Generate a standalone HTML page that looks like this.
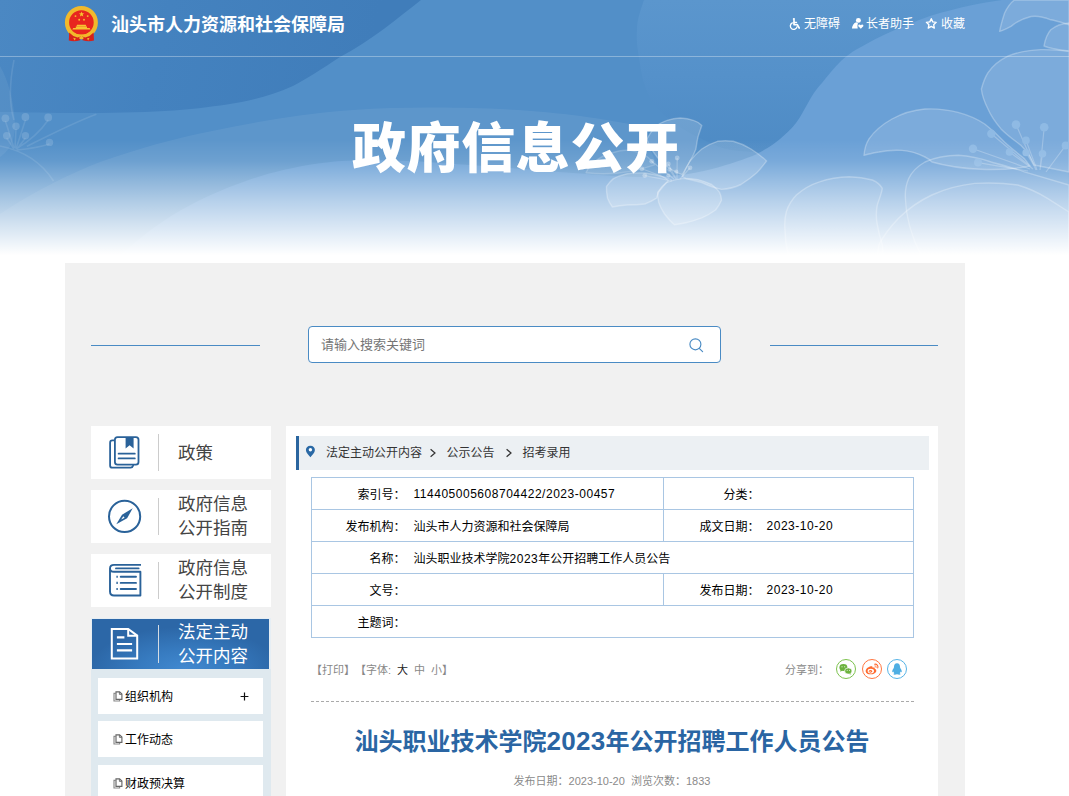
<!DOCTYPE html>
<html lang="zh-CN">
<head>
<meta charset="utf-8">
<title>汕头职业技术学院2023年公开招聘工作人员公告</title>
<style>
*{box-sizing:border-box;margin:0;padding:0}
html,body{width:1069px;height:796px;overflow:hidden;background:#fff}
body{position:relative;text-spacing-trim:space-all;font-family:"Liberation Sans","Noto Sans CJK SC",sans-serif;font-size:12px;color:#333}
.abs{position:absolute}
#banner{position:absolute;left:0;top:0;width:1069px;height:263px;overflow:hidden}
#banner svg.bg{position:absolute;left:0;top:0}
#sitename{position:absolute;left:111px;top:11px;height:28px;line-height:28px;font-size:18px;font-weight:bold;color:#fff;white-space:nowrap}
#topline{position:absolute;left:0;top:56px;width:1069px;height:1px;background:rgba(255,255,255,.32)}
.tnav{position:absolute;top:14px;height:20px;line-height:20px;font-size:12px;color:#fff;white-space:nowrap}
#bigtitle{position:absolute;left:352px;top:109px;width:340px;letter-spacing:.6px;height:80px;line-height:80px;font-size:54px;font-weight:900;color:#fff;white-space:nowrap}
#wrap{position:absolute;left:65px;top:263px;width:900px;height:533px;background:#f1f1f1}
.hl{position:absolute;top:82px;height:1px;background:#4a8bc4;width:169px}
#sbox{position:absolute;left:243px;top:63px;width:413px;height:37px;border:1px solid #4a8bc4;border-radius:4px;background:#fff}
#sbox span{position:absolute;left:12px;top:0;line-height:35px;font-size:13px;color:#757575}
.litem{position:absolute;left:26px;width:180px;height:53px;background:#fff}
.litem .dv{position:absolute;left:67px;top:8px;width:1px;height:37px;background:#ccc}
.litem .tx{position:absolute;left:87px;top:0;font-size:17.5px;color:#444;white-space:nowrap}
.litem .one{line-height:53px;top:1px}
.litem .two{line-height:23.7px;top:3px}
.litem svg{position:absolute}
#sub{position:absolute;left:26px;top:406px;width:180px;height:140px;background:#dfe9ef}
.sitem{position:absolute;left:7px;width:165px;height:36px;background:#fff;line-height:36px;font-size:12px;color:#000}
.sitem .t{position:absolute;left:27px;top:1px}
.sitem svg{position:absolute;left:15px;top:13px}
#panel{position:absolute;left:221px;top:163px;width:652px;height:380px;background:#fff}
#crumb{position:absolute;left:10px;top:10px;width:633px;height:34px;background:#ecf0f3;border-left:3px solid #2a659f;line-height:34px;font-size:12px;color:#333}
#crumb span{position:absolute;top:0;white-space:nowrap}
table.info{position:absolute;left:25px;top:51px;width:603px;border-collapse:collapse;font-size:12px;color:#000}
table.info td{border:1px solid #a9c6e3;height:32px;padding:0;white-space:nowrap;vertical-align:middle}
table.info td.l{text-align:right;border-right:none}
table.info td.v{border-left:none;padding-left:8px}

.n{letter-spacing:.52px}
#tools{position:absolute;left:25px;top:234px;height:20px;line-height:20px;font-size:11px;color:#888;white-space:nowrap}
#tools b{font-weight:normal;margin-left:6px}
#tools b.on{color:#222}
#share{position:absolute;left:499px;top:234px;height:20px;line-height:20px;font-size:11px;color:#888;white-space:nowrap}
.sic{position:absolute;top:233px;width:20px;height:20px}
#dash{position:absolute;left:25px;top:275px;width:603px;height:0;border-top:1px dashed #aaa}
#atitle{position:absolute;left:0;top:298px;width:652px;text-align:center;font-size:24px;line-height:36px;font-weight:bold;color:#2a65a3;white-space:nowrap}
#atitle .d{font-size:26px;letter-spacing:.3px;line-height:30px}
#ameta{position:absolute;left:0;top:346px;width:652px;text-align:center;font-size:11px;line-height:18px;color:#8a8a8a;white-space:nowrap}
#act{background:#e6eef4}
#act .in{position:absolute;left:1px;top:1px;width:177px;height:50px;background:radial-gradient(ellipse 95px 42px at 52% 100%,#4189d0 0%,#377bc0 45%,#2c67a7 100%)}
#act .tx{color:#fff;top:3px}
#act .dv{background:#d4dce4;top:7px;height:38px}
.plus{position:absolute;left:143px;top:0;font-size:13px;color:#000}
</style>
</head>
<body>

<div id="banner">
<svg class="bg" width="1069" height="263" viewBox="0 0 1069 263">
  <defs>
    <linearGradient id="fade" x1="0" y1="0" x2="0" y2="263" gradientUnits="userSpaceOnUse">
      <stop offset="0" stop-color="#fff" stop-opacity="0"/>
      <stop offset="0.532" stop-color="#fff" stop-opacity="0"/>
      <stop offset="0.612" stop-color="#fff" stop-opacity="0.10"/>
      <stop offset="0.692" stop-color="#fff" stop-opacity="0.32"/>
      <stop offset="0.768" stop-color="#fff" stop-opacity="0.52"/>
      <stop offset="0.848" stop-color="#fff" stop-opacity="0.71"/>
      <stop offset="0.924" stop-color="#fff" stop-opacity="0.89"/>
      <stop offset="0.970" stop-color="#fff" stop-opacity="1"/>
      <stop offset="1" stop-color="#fff" stop-opacity="1"/>
    </linearGradient>
    <linearGradient id="gDark" x1="0" y1="0" x2="360" y2="90" gradientUnits="userSpaceOnUse">
      <stop offset="0" stop-color="#4b88c3"/>
      <stop offset="0.45" stop-color="#4482bf"/>
      <stop offset="1" stop-color="#407dba"/>
    </linearGradient>
    <linearGradient id="gBlob" x1="0" y1="0" x2="0" y2="150" gradientUnits="userSpaceOnUse">
      <stop offset="0" stop-color="#5b96cd"/>
      <stop offset="0.5" stop-color="#5591ca"/>
      <stop offset="1" stop-color="#4e8bc5"/>
    </linearGradient>
  </defs>
  <rect width="1069" height="263" fill="#528fc8"/>
  <!-- blob in the middle-right with vertical gradient -->
  <path d="M644 0 C640 12 637 20 637 30 C636 42 638 50 639 58 C641 70 642 78 645 86 C648 96 652 102 657 108 C664 116 670 120 678 126 C690 134 700 138 712 144 C724 150 740 152 758 152 L1069 152 L1069 0 Z" fill="url(#gBlob)"/>
  <!-- upper faint swoosh -->
  <path d="M0 214 C40 188 70 174 100 162 C140 148 172 139 212 131 C260 121 300 114 353 110 C400 107 440 107 500 109 C560 112 600 118 640 126 L700 263 L0 263 Z" fill="#fff" opacity=".065"/>
  <!-- light region: below swoosh c and right of rising boundary -->
  <path d="M112 263 C150 228 172 214 200 200 C230 186 254 177 283 170 C310 164 330 161 355 160.500 C390 160 415 161 439 163 C470 165 500 167 524 169 C550 171 570 173 587 174 C610 176 625 177 645 177 C665 177 690 175 712 169 C730 164 745 159 757 154 C768 148 774 144 780 139 C788 132 792 128 796 123 C801 116 804 110 808 103 C813 94 817 88 822 83 C828 75 834 68 841 61 C848 55 853 51 861 47 C880 36 900 27 930 16 C960 7 980 3 1002 0 L1069 0 L1069 263 Z" fill="#6aa0d6"/>
  <!-- dark wave top-left -->
  <path d="M0 0 H421 C398 18 372 40 340 57 C322 69 308 78 293 86 C270 96 250 101 227 104.500 C210 107 190 109.500 165 111 C140 112.500 110 113 80 113 C50 113 25 112.500 0 112 Z" fill="url(#gDark)"/>
  <!-- flowers -->
  <g fill="#fff" fill-opacity=".12" stroke="#fff" stroke-opacity=".27" stroke-width="1.400" stroke-linejoin="round">
    <!-- small flower near title -->
    <path d="M586 172.700 C588 168 591 164 595.700 161 C600 157 605 155 611.400 153 C617 151 623 150 629 150 C635 151 640 152.500 644.800 155 C649 157.500 652 161 654.700 164.800 C640 170 615 176 586 172.700 Z" fill-opacity=".07" stroke-opacity=".18"/>
    <path fill-opacity=".17" d="M646.800 139.300 C649 135 651.500 131 654.700 127.500 C658 124.500 662 122 666.400 120.600 C671 119 675.500 118 680.200 118 C685 118.200 689.500 119 694 120.600 C697 121.500 699.500 123 701.800 125.500 C700.500 129.500 699 133.500 697.900 137.300 C697 141 696.500 145 695.900 149 C694.500 153 692.500 157 690 161 C687.500 165.500 685 170 682.200 174.700 C668 170 654 158 646.800 139.300 Z"/>
    <path fill-opacity=".17" d="M682.200 176.600 C684.500 171 687 166 690 161 C693.500 156.500 697.500 152.500 701.800 149 C706.500 145.500 712 143 717.500 141.300 C722.500 140.500 728 140.500 733.200 141.300 C739.500 143 745.500 145.500 751 149 C756.500 152.500 762 156.500 766.600 161 C763.500 165 760.500 169 756.800 172.700 C752 177 746.500 181 741 184.500 C734.500 187.500 728 189 721.500 189.400 C714.500 188 708 185.500 701.800 182.500 C696.500 181 691 179.800 686 178.600 Z"/>
    <path fill-opacity=".17" d="M657.600 192.300 C660 188.500 663 185 666.400 182.500 C671.500 180.500 676.500 179 682.200 178.600 C687.500 178.400 692.500 178.800 697.900 179.600 C702.500 180.800 707.500 182.500 711.600 184.500 C714.500 186.800 717.500 189.300 719.500 192.300 C720.800 195 721.500 197.500 721.500 200.200 C720 203.800 718 207 715.600 210 C711.500 213 707 215.700 701.800 217.900 C696.500 219.800 691.500 221.500 686 222.800 C682 223.700 678 224.300 674.300 224.800 C670.500 221.500 667.500 218 664.500 214 C662 210.200 660 206.300 658.600 202.200 C657.800 199 657.500 195.500 657.600 192.300 Z"/>
    <path fill-opacity=".17" d="M606.500 186.400 C608.500 183.500 610.500 181 613.400 178.600 C617.500 176.300 622.500 174.700 627.200 173.700 C633 173 639 172.800 644.800 173 C651 173.800 657 175 662.500 176.600 C664.800 177.700 666.800 179 668.400 180.600 C665 184.500 661.500 188.300 658.600 192.300 C657.800 194.300 657 196.200 656.600 198.200 C653 200.500 649 202.500 644.800 204 C639 204.800 633 205 627.200 205 C622 205.500 617 206.200 612.400 207 C610.300 204.200 608.700 201.300 607.500 198.200 C606.700 194.300 606.300 190.300 606.500 186.400 Z"/>
    <!-- big lily on the right -->
    <path d="M999.600 31.400 C1001 24 1003 18 1004.500 13.200 C1007 8 1010 3 1014.500 0 L1069 0 L1069 24.800 C1063 23 1057 21 1050.800 19.800 C1044 17 1037 15.500 1031 16.500 C1023 18.500 1016 22 1011 26.400 C1006 29 1002 31 999.600 31.400 Z"/>
    <path d="M1044 46 C1045 40 1047 34 1050.800 29.700 C1056 25.500 1062 23.500 1069 23 L1069 51 C1060 50 1051 49 1044 46 Z"/>
    <path d="M981.400 89 C983 83 985 77.500 988 72.700 C993 65.500 1000 60 1007.900 56.200 C1018 52 1029 50 1040.900 49.600 C1050 49.500 1060 50 1069 51.200 L1069 172 L1034 165 C1031 158 1027 151 1021 145.400 C1014 140 1007 135 1001 128.900 C996 123 991 116 988 109 C984.500 102 982 96 981.400 89 Z"/>
    <path d="M905.400 198.300 C905 191 906 184.500 908.700 178.500 C912 171.500 918 166 925 162 C935 157.500 946 155.300 958.300 155.300 C970 156 981 158.500 991.300 162 C1002 165 1013 168 1024.400 171.800 L1069 185 L1069 263 L925 263 C915 245 906 222 905.400 198.300 Z" fill-opacity=".05"/>
    <path d="M864 155.300 C864.500 149 866 143.500 869 138.800 C875 130.500 883 124 892 119 C902 113.500 913 110 925 109 C936 108.500 947 109.500 958 112.400 C968 115 977 119 984.700 124 C992 129.500 998.500 135.500 1004.500 142 C1011 148 1018 153.500 1024.400 158.600 L1030 166 C1000 172 960 170 932 162 C930 160 928 158.500 925 157 C918 153.500 910 151 902 150.400 C894 150 886 150.500 879 152 C873 153 868 154 864 155.300 Z"/>
    <path d="M784.800 228 C784.500 222 785 216.500 786.400 211.500 C788.500 205 792 199.500 796.400 195 C803 189 811 184.500 819.500 181.800 C829 178.500 839 177 849.200 176.800 C857 177 865 178 872.400 180 C877 182 880.500 185 882.300 188.400 C881.500 194 879 199.500 877.300 205 C876 211.500 876 218 877.300 224.700 C878.500 231.500 880 238 882.300 244.500 L884 263 L790 263 C787 252 785 240 784.800 228 Z" fill-opacity=".08"/>
    <path d="M879 244.500 C884 235 891 226 898.800 218 C908 209 919 201 931.800 195 C945 189 960 185 974.800 183.400 C989 182.500 1004 183 1017.800 185 C1028 188 1038 192.500 1047.500 198.300 L1069 212 L1069 263 L876 263 Z" fill-opacity=".05"/>
  </g>
  <!-- stamens -->
  <g fill="none" stroke="#fff" stroke-opacity=".24" stroke-width="1.200">
    <path d="M1016 124.600 L1036 170 M1044.200 127.200 L1040 170 M991.300 133.800 L1032 168 M1026 140.400 L1037 170 M973 148.700 L1030 169 M1009.500 152 L1033 169 M1026 152.700 L1036 169 M1042.500 153.700 L1040 170 M978 162.600 L1028 171 M1065.700 145.400 L1046 172"/>
    <path d="M677.200 158 L677 179 M651.700 161.300 L674 179 M668.400 163.900 L676 179 M690 167.800 L680 179 M641.900 168.800 L672 180 M669.400 169.700 L676 179 M644.800 175.600 L672 181"/>
  </g>
  <g fill="#8fbae4" stroke="none">
    <circle cx="1016" cy="124.600" r="4.300"/><circle cx="1044.200" cy="127.200" r="4.300"/><circle cx="991.300" cy="133.800" r="4.200"/>
    <circle cx="1026" cy="140.400" r="3.800"/><circle cx="973" cy="148.700" r="4.200"/><circle cx="1009.500" cy="152" r="3.800"/>
    <circle cx="1026" cy="152.700" r="3.600"/><circle cx="1042.500" cy="153.700" r="3.800"/><circle cx="978" cy="162.600" r="4"/><circle cx="1065.700" cy="145.400" r="4"/>
  </g>
  <g fill="#fff" fill-opacity=".3" stroke="none">
    <circle cx="677.200" cy="158" r="2.400"/><circle cx="651.700" cy="161.300" r="2.400"/><circle cx="668.400" cy="163.900" r="2.300"/>
    <circle cx="690" cy="167.800" r="2.400"/><circle cx="641.900" cy="168.800" r="2.400"/><circle cx="669.400" cy="169.700" r="2.100"/>
    <circle cx="676.300" cy="171.700" r="2.100"/><circle cx="644.800" cy="175.600" r="2.400"/><circle cx="668.400" cy="175.600" r="2.100"/>
  </g>
  <g fill="#fff" fill-opacity=".15" stroke="none">
    <circle cx="5.400" cy="118.300" r="3.900"/><circle cx="25.400" cy="117" r="3.900"/><circle cx="48.200" cy="117.500" r="3.900"/><circle cx="16" cy="126.300" r="3.700"/>
    <circle cx="6.700" cy="135.700" r="3.700"/><circle cx="25.400" cy="135.700" r="3.700"/><circle cx="49.500" cy="142.400" r="3.700"/>
    <path d="M0 66 C8 80 14 100 15 125 C15 140 10 150 0 157 Z" fill-opacity=".06"/>
  </g>
  <g fill="none" stroke="#fff" stroke-opacity=".1" stroke-width="1.600">
    <path d="M5.400 121 L14 148 M25.400 120 L16 149 M48.200 120 C40 132 28 142 16 149 M16 129 L15 148 M6.700 138 L14 149 M25.400 138 L17 149 M49.500 144 C40 147 28 149 17 150 M0 146 C20 150 40 160 53.500 181 M26.800 146.400 C50 135 75 122 96.400 114.300 M14 60 C10 80 8 100 14 120"/>
  </g>
  <rect width="1069" height="263" fill="url(#fade)"/>
</svg>
<svg class="abs" style="left:64px;top:5px" width="36" height="38" viewBox="0 0 36 38">
  <circle cx="17.400" cy="17.500" r="14.400" fill="#e8261f" stroke="#f2b92b" stroke-width="4.200"/>
  <polygon points="17.600,6.400 18.300,8.300 20.300,8.400 18.700,9.600 19.300,11.500 17.600,10.400 15.900,11.500 16.500,9.600 14.900,8.400 16.900,8.300" fill="#f7c92f"/>
  <circle cx="11.500" cy="11.100" r=".95" fill="#f5c12d"/><circle cx="23.700" cy="11.100" r=".95" fill="#f5c12d"/>
  <circle cx="15.200" cy="14.800" r=".95" fill="#f5c12d"/><circle cx="20" cy="14.800" r=".95" fill="#f5c12d"/>
  <path d="M13 19.700 h8.800 l.5 1.500 h-9.800 z M11.800 21.600 h11.200 v1.500 h2.600 l.9 1.500 H8.300 l.9-1.500 h2.600 z" fill="#f6c531"/>
  <path d="M5.200 27.400 Q8.500 31.200 13.500 32.600 L16.600 31.400 L16.200 35.200 Q10.500 37.200 4.800 35.600 Z" fill="#d6211c"/>
  <path d="M29.600 27.400 Q26.300 31.200 21.300 32.600 L18.200 31.400 L18.600 35.200 Q24.300 37.200 30 35.600 Z" fill="#d6211c"/>
  <path d="M9.400 27.200 Q13 29.800 17.400 29.400 Q21.800 29.800 25.400 27.200 L24.600 29 Q21 31.400 17.400 31 Q13.800 31.400 10.200 29 Z" fill="#f2b92b"/>
  <ellipse cx="17.400" cy="33" rx="2.300" ry="1.300" fill="#f2b92b"/>
  <path d="M9.200 32.800 l2.700 .6 l-1.300 2 z M25.600 32.800 l-2.700 .6 l1.300 2 z" fill="#f2b92b"/>
</svg>
<div id="sitename">汕头市人力资源和社会保障局</div>
<div id="topline"></div>
<svg class="abs" style="left:788px;top:16px" width="14" height="14" viewBox="0 0 14 14" fill="none" stroke="#fff" stroke-linecap="round" stroke-linejoin="round">
  <circle cx="5.9" cy="3.1" r="1.15" fill="#fff" stroke="none"/>
  <path d="M6 4.6 V8.6 H9.3 L11.2 12" stroke-width="1.7"/>
  <path d="M6.2 6.3 H8.6" stroke-width="1.2"/>
  <path d="M4.3 6.9 A3.4 3.4 0 1 0 9.1 10.6" stroke-width="1.3"/>
</svg>
<svg class="abs" style="left:850px;top:16px" width="15" height="14" viewBox="0 0 15 14" fill="#fff">
  <ellipse cx="8.4" cy="4.4" rx="2.5" ry="2.3"/>
  <path d="M1.9 12.4 Q2.6 7.6 6.2 6.3 Q7.2 7.1 7.9 7.1 Q7.2 9.5 7.7 12.4 Z"/>
  <path d="M10.8 12.8 L8.3 10.3 Q7.8 8.6 9.3 8.4 Q10.3 8.4 10.8 9.3 Q11.3 8.4 12.3 8.4 Q13.8 8.6 13.3 10.3 Z"/>
</svg>
<svg class="abs" style="left:924px;top:16px" width="15" height="15" viewBox="0 0 15 15" fill="none" stroke="#fff" stroke-width="1.35" stroke-linejoin="round">
  <path d="M7.3 2.7 L8.75 5.9 L12.2 6.3 L9.65 8.65 L10.35 12.1 L7.3 10.4 L4.25 12.1 L4.95 8.65 L2.4 6.3 L5.85 5.9 Z"/>
</svg>
<div class="tnav" style="left:804px">无障碍</div>
<div class="tnav" style="left:866px">长者助手</div>
<div class="tnav" style="left:941px">收藏</div>
<div id="bigtitle">政府信息公开</div>
</div>

<div id="wrap">
  <div class="hl" style="left:26px"></div>
  <div class="hl" style="left:705px;width:168px"></div>
  <div id="sbox"><span>请输入搜索关键词</span><svg class="abs" style="left:378px;top:9px" width="18" height="18" viewBox="0 0 18 18" fill="none" stroke="#4a8bc4" stroke-width="1.15" stroke-linecap="round"><circle cx="8.4" cy="8.3" r="5.5"/><path d="M12.5 12.6 L15.6 15.7"/></svg></div>

  <div class="litem" style="top:163px"><svg style="left:16px;top:9px" width="36" height="36" viewBox="0 0 36 36" fill="none" stroke="#2a6299" stroke-width="1.8" stroke-linejoin="round" stroke-linecap="round">
  <path d="M7.6 5.4 H5.4 Q3.1 5.4 3.1 7.7 V30.4 Q3.1 32.7 5.4 32.7 H23.6 Q25.6 32.7 26.2 30.6"/>
  <rect x="7.9" y="2.2" width="23.6" height="27.4" rx="2.6" fill="#fff"/>
  <path d="M18.6 2.2 H26.6 V13.6 L22.6 10.2 L18.6 13.6 Z" fill="#2a6299" stroke="none"/>
  <path d="M11.6 18.7 H27.8 M11.6 23.4 H27.8"/>
</svg><div class="dv"></div><div class="tx one">政策</div></div>
  <div class="litem" style="top:227px"><svg style="left:16px;top:9px" width="36" height="36" viewBox="0 0 36 36" fill="none" stroke="#2a6299" stroke-width="2">
  <circle cx="17.6" cy="17.4" r="15.6"/>
  <path d="M25.7 9.3 L20.1 19.3 L9.3 25.3 L15 15.8 Z" fill="#2a6299" stroke="none"/>
  <path d="M16.3 17.2 L14.2 20.6 L17.6 18.7 Z" fill="#fff" stroke="none"/>
</svg><div class="dv"></div><div class="tx two">政府信息<br>公开指南</div></div>
  <div class="litem" style="top:291px"><svg style="left:16px;top:8px" width="36" height="36" viewBox="0 0 36 36" fill="none" stroke="#2a6299" stroke-width="1.9" stroke-linecap="butt" stroke-linejoin="round">
  <path d="M34 2.9 H7 Q3 2.9 3 6.4 Q3 9.8 7 9.8 H33.4 V33.5 H7 Q3 33.5 3 29.5 V6.4"/>
  <path d="M9 6.4 H31.6" stroke-linecap="round"/>
  <path d="M13.7 14.8 H29 M13.7 20.9 H29 M13.7 27 H29" stroke-linecap="round"/>
  <path d="M9.4 14.8 H10.8 M9.4 20.9 H10.8 M9.4 27 H10.8" stroke-width="2.1"/>
</svg><div class="dv"></div><div class="tx two">政府信息<br>公开制度</div></div>
  <div class="litem" id="act" style="top:355px"><div class="in"></div><svg style="left:18px;top:8px" width="32" height="36" viewBox="0 0 32 36" fill="none" stroke="#fff" stroke-width="2" stroke-linejoin="miter">
  <path d="M2.8 3 H19.2 L28.2 9.6 V32.4 H2.8 Z"/>
  <path d="M19.2 3 V9.8 H28.2"/>
  <path d="M7.9 11.4 H15.4 M7.9 18 H23.1 M7.9 24.4 H23.1" stroke-width="2.2"/>
</svg><div class="dv"></div><div class="tx two">法定主动<br>公开内容</div></div>
  <div id="sub">
    <div class="sitem" style="top:9px"><svg width="10" height="11" viewBox="0 0 10 11" fill="none" stroke="#666" stroke-width="1.15"><path d="M2.6 2.4 H1 V10 H6.6 V8.8" stroke="#8a8a8a"/><path d="M3 .8 H6.6 L8.9 3.1 V8.4 H3 Z"/><path d="M6.4 1 V3.4 H8.8" stroke-width=".9"/></svg><span class="t">组织机构</span><svg style="left:142px;top:14px" width="9" height="9" viewBox="0 0 9 9" stroke="#111" stroke-width="1.200" fill="none"><path d="M.6 4.500 H8.400 M4.500 .6 V8.400"/></svg></div>
    <div class="sitem" style="top:52px"><svg width="10" height="11" viewBox="0 0 10 11" fill="none" stroke="#666" stroke-width="1.15"><path d="M2.6 2.4 H1 V10 H6.6 V8.8" stroke="#8a8a8a"/><path d="M3 .8 H6.6 L8.9 3.1 V8.4 H3 Z"/><path d="M6.4 1 V3.4 H8.8" stroke-width=".9"/></svg><span class="t">工作动态</span></div>
    <div class="sitem" style="top:96px"><svg width="10" height="11" viewBox="0 0 10 11" fill="none" stroke="#666" stroke-width="1.15"><path d="M2.6 2.4 H1 V10 H6.6 V8.8" stroke="#8a8a8a"/><path d="M3 .8 H6.6 L8.9 3.1 V8.4 H3 Z"/><path d="M6.4 1 V3.4 H8.8" stroke-width=".9"/></svg><span class="t">财政预决算</span></div>
  </div>

  <div id="panel">
    <div id="crumb">
      <svg class="abs" style="left:6px;top:9px" width="11" height="13" viewBox="0 0 11 13"><path d="M5.4 .7 C2.7 .7 .9 2.6 .9 5 C.9 7.6 3.6 10.2 5.4 12.2 C7.2 10.2 9.9 7.6 9.9 5 C9.9 2.6 8.1 .7 5.4 .7 Z" fill="#2a69a5"/><circle cx="5.4" cy="4.7" r="1.7" fill="#fff"/></svg><span style="left:27px">法定主动公开内容</span><svg class="abs" style="left:130px;top:12px" width="8" height="10" viewBox="0 0 8 10" fill="none" stroke="#333" stroke-width="1.2"><path d="M1.6 1.2 L6 5 L1.6 8.8"/></svg><svg class="abs" style="left:206px;top:12px" width="8" height="10" viewBox="0 0 8 10" fill="none" stroke="#333" stroke-width="1.2"><path d="M1.6 1.2 L6 5 L1.6 8.8"/></svg>
      <span style="left:147.5px">公示公告</span>
      <span style="left:223.5px">招考录用</span>
    </div>
    <table class="info">
      <tr><td class="l" style="width:94px">索引号：</td><td class="v" style="width:258px"><span class="n">114405005608704422/2023-00457</span></td><td class="l" style="width:96px">分类：</td><td class="v"></td></tr>
      <tr><td class="l">发布机构：</td><td class="v">汕头市人力资源和社会保障局</td><td class="l">成文日期：</td><td class="v" style="padding-left:7px"><span class="n">2023-10-20</span></td></tr>
      <tr><td class="l">名称：</td><td class="v" colspan="3">汕头职业技术学院<span class="n">2023</span>年公开招聘工作人员公告</td></tr>
      <tr><td class="l">文号：</td><td class="v"></td><td class="l">发布日期：</td><td class="v" style="padding-left:7px"><span class="n">2023-10-20</span></td></tr>
      <tr><td class="l">主题词：</td><td class="v" colspan="3"></td></tr>
    </table>

    <div id="tools">【打印】【字体:<b class="on">大</b><b>中</b><b>小</b>】</div>
    <div id="share">分享到：</div>
<svg class="sic" style="left:550px" viewBox="0 0 20 20"><circle cx="10" cy="10" r="9.5" fill="#fff" stroke="#7cc24d"/><ellipse cx="7.4" cy="8.5" rx="4" ry="3.4" fill="#6cb33e"/><path d="M4.6 10.6 L4.2 12.7 L6.6 11.6 Z" fill="#6cb33e"/><ellipse cx="12.3" cy="12" rx="3.7" ry="3.1" fill="#6cb33e" stroke="#fff" stroke-width=".7"/><path d="M14.2 14.2 L15.4 15.6 L12.9 14.9 Z" fill="#6cb33e"/><circle cx="6" cy="7.7" r=".55" fill="#fff"/><circle cx="8.7" cy="7.7" r=".55" fill="#fff"/><circle cx="11.2" cy="11.3" r=".5" fill="#fff"/><circle cx="13.5" cy="11.3" r=".5" fill="#fff"/></svg>
<svg class="sic" style="left:575.5px" viewBox="0 0 20 20"><circle cx="10" cy="10" r="9.5" fill="#fff" stroke="#ff7640"/><path d="M8.9 7.2 C6.3 7.6 3.4 10 3.7 12.4 C4 14.7 6.8 15.6 9.4 15.3 C12.2 15 14.6 13.3 14.3 11.4 C14.1 10.3 13.2 10.1 12.7 10 C13.1 9 12.6 8.2 11.4 8.6 C10.9 8.7 10.6 8.9 10.5 8.7 C10.9 7.6 10.2 7 8.9 7.2 Z" fill="#ff6a2f"/><ellipse cx="8.8" cy="12.1" rx="3.2" ry="2.4" fill="#fff"/><ellipse cx="8.5" cy="12.3" rx="1.6" ry="1.4" fill="#ff6a2f"/><circle cx="8.1" cy="12.5" r=".55" fill="#fff"/><path d="M12.6 5.2 C14.8 4.8 16.5 6.7 15.8 8.9" fill="none" stroke="#ff6a2f" stroke-width="1.1" stroke-linecap="round"/><path d="M12.9 6.9 C13.8 6.8 14.5 7.5 14.2 8.4" fill="none" stroke="#ff6a2f" stroke-width=".9" stroke-linecap="round"/></svg>
<svg class="sic" style="left:601px" viewBox="0 0 20 20"><circle cx="10" cy="10" r="9.5" fill="#fff" stroke="#56b3e6"/><path d="M10 4.3 C7.9 4.3 7 5.9 7 7.8 C7 8.4 6.9 8.8 6.6 9.3 C5.7 10.5 5.1 11.7 5.3 12.9 C5.5 13.5 6 13 6.4 12.4 C6.5 13.2 6.9 13.8 7.4 14.3 C6.7 14.5 6.3 14.9 6.5 15.3 C6.8 15.8 8.8 15.7 10 15.2 C11.2 15.7 13.2 15.8 13.5 15.3 C13.7 14.9 13.3 14.5 12.6 14.3 C13.1 13.8 13.5 13.2 13.6 12.4 C14 13 14.5 13.5 14.7 12.9 C14.9 11.7 14.3 10.5 13.4 9.3 C13.1 8.8 13 8.4 13 7.8 C13 5.9 12.1 4.3 10 4.3 Z" fill="#4eaee3"/></svg>
    <div id="dash"></div>
    <div id="atitle">汕头职业技术学院<span class="d">2023</span>年公开招聘工作人员公告</div>
    <div id="ameta">发布日期：2023-10-20&nbsp;&nbsp;浏览次数：1833</div>
  </div>
</div>

</body>
</html>
